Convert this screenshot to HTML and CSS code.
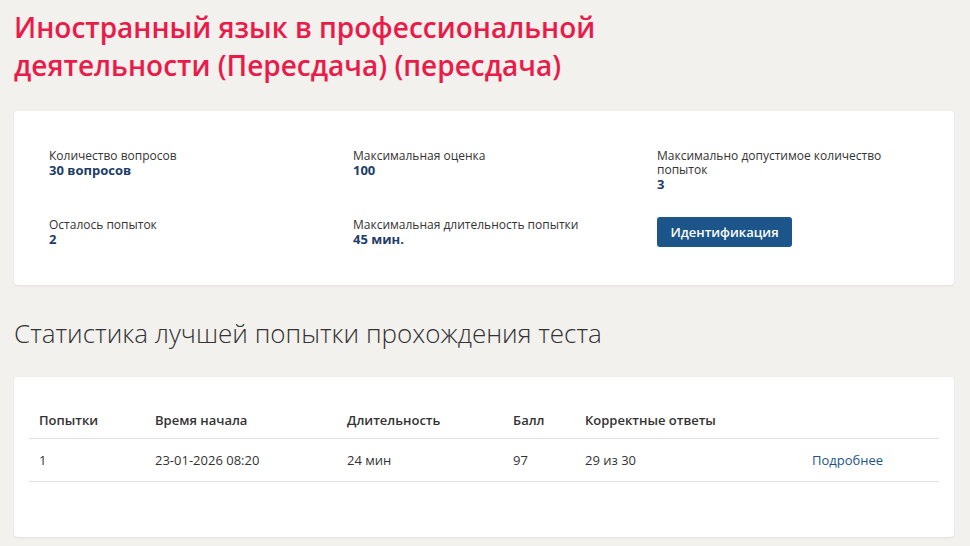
FILE: index.html
```html
<!DOCTYPE html>
<html lang="ru">
<head>
<meta charset="utf-8">
<title>Тест</title>
<link rel="stylesheet" href="styles.css">
</head>
<body>
<main class="page">
  <h1 class="title">Иностранный язык в профессиональной деятельности (Пересдача) (пересдача)</h1>

  <section class="card info">
    <div class="info-grid">
      <div class="item">
        <div class="label">Количество вопросов</div>
        <div class="value">30 вопросов</div>
      </div>
      <div class="item">
        <div class="label">Максимальная оценка</div>
        <div class="value">100</div>
      </div>
      <div class="item">
        <div class="label">Максимально допустимое количество попыток</div>
        <div class="value">3</div>
      </div>
      <div class="item">
        <div class="label">Осталось попыток</div>
        <div class="value">2</div>
      </div>
      <div class="item">
        <div class="label">Максимальная длительность попытки</div>
        <div class="value">45 мин.</div>
      </div>
      <div class="item">
        <button class="btn">Идентификация</button>
      </div>
    </div>
  </section>

  <h2 class="subtitle">Статистика лучшей попытки прохождения теста</h2>

  <section class="card stats">
    <table class="table">
      <thead>
        <tr>
          <th class="c1">Попытки</th>
          <th class="c2">Время начала</th>
          <th class="c3">Длительность</th>
          <th class="c4">Балл</th>
          <th class="c5">Корректные ответы</th>
          <th class="c6"></th>
        </tr>
      </thead>
      <tbody>
        <tr>
          <td>1</td>
          <td>23-01-2026 08:20</td>
          <td>24 мин</td>
          <td>97</td>
          <td>29 из 30</td>
          <td><a class="link" href="#">Подробнее</a></td>
        </tr>
      </tbody>
    </table>
  </section>
</main>
</body>
</html>
```

FILE: styles.css
```css
* { box-sizing: border-box; }
html, body { margin: 0; padding: 0; }
body {
  background: #f2f1ee;
  font-family: "Open Sans", "Noto Sans", sans-serif;
  color: #333;
  width: 970px;
  height: 546px;
  overflow: hidden;
}
.page {
  padding: 8px 16px 0 14px;
}
.title {
  margin: 0;
  font-family: "Open Sans", sans-serif;
  font-weight: 600;
  font-size: 28px;
  line-height: 38px;
  color: #ea1b49;
  width: 620px;
}
.card {
  background: #fff;
  border-radius: 4px;
  box-shadow: 0 1px 2px rgba(0,0,0,0.08);
}
.info {
  margin-top: 27px;
  padding: 38px 0 36px 35px;
  height: 174px;
}
.info-grid {
  display: grid;
  grid-template-columns: 304px 304px 260px;
  row-gap: 0;
}
.item {
  min-height: 69px;
}
.label {
  font-size: 12px;
  line-height: 14px;
  color: #333;
}
.value {
  font-size: 13px;
  line-height: 14px;
  font-weight: 700;
  color: #1d3d68;
}
.btn {
  margin-top: -1px;
  background: #1b5589;
  color: #fff;
  border: none;
  border-radius: 3px;
  font-family: "Open Sans", sans-serif;
  font-weight: 600;
  font-size: 13px;
  height: 30px;
  width: 135px;
  padding: 0;
  cursor: pointer;
}
.subtitle {
  margin: 31px 0 0 0;
  font-weight: 300;
  font-size: 26px;
  line-height: 34px;
  color: #333;
}
.stats {
  margin-top: 27px;
  padding: 27px 15px 53px 15px;
  height: 160px;
}
.table {
  width: 100%;
  border-collapse: collapse;
  font-size: 13px;
}
.table th {
  text-align: left;
  font-weight: 600;
  padding: 8px 10px 9px;
  border-bottom: 1px solid #e0dfdc;
  color: #333;
  line-height: 17px;
}
.table td {
  text-align: left;
  padding: 12px 10px 12px;
  border-bottom: 1px solid #e0dfdc;
  line-height: 18px;
  color: #333;
}
.c1 { width: 116px; }
.c2 { width: 192px; }
.c3 { width: 166px; }
.c4 { width: 72px; }
.c5 { width: 227px; }
.link {
  color: #1b5589;
  text-decoration: none;
}
```
